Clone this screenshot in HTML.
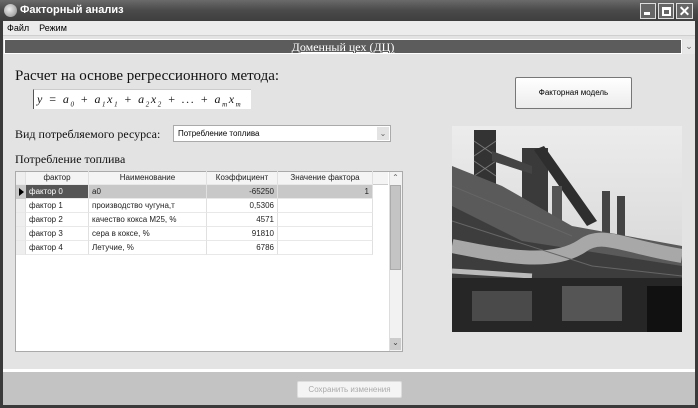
<!DOCTYPE html>
<html><head><meta charset="utf-8"><style>
*{margin:0;padding:0;box-sizing:border-box}
body{width:698px;height:408px;overflow:hidden;background:#3a3a3a;position:relative;font-family:"Liberation Sans",sans-serif}
.abs{position:absolute}
.title{left:0;top:0;width:698px;height:21px;background:linear-gradient(#6a6a6a,#4a4a4a 50%,#3e3e3e);color:#fff;font-weight:bold;font-size:11px;line-height:21px;padding-left:20px}
.client{left:3px;top:21px;width:692px;height:384px;background:#e3e3e3}
.menu{left:3px;top:21px;width:692px;height:15px;background:#ececec;font-size:9px;line-height:15px;padding-left:4px;border-bottom:1px solid #cfcfcf}
.banner{left:4px;top:39px;width:678px;height:15px;background:#5c5c5c;border:1px solid #fff;color:#fff;font-family:"Liberation Serif",serif;font-size:12px;line-height:15px;text-align:center;text-decoration:underline}
.ddbtn{left:683px;top:39px;width:12px;height:15px;background:#e8e8e8;font-size:9px;text-align:center;color:#666;line-height:14px}
.serif{font-family:"Liberation Serif",serif;color:#111}
.cell{position:absolute;font-size:8px;line-height:14px;height:14px;color:#222;border-right:1px solid #e0e0e0;border-bottom:1px solid #e8e8e8;padding:0 3px;white-space:nowrap}
.btn{border:1px solid #777;border-radius:2px;background:linear-gradient(#fff,#ececec);font-size:8px;text-align:center}
</style></head><body>
<div class="abs title">Факторный анализ</div>
<div class="abs" style="left:4px;top:4px;width:13px;height:13px;border-radius:50%;background:radial-gradient(circle at 40% 40%,#eee,#888)"></div>
<div class="abs" style="left:640px;top:3px;width:16px;height:16px;border:1px solid #ddd;background:#666"><div style="position:absolute;left:3px;bottom:3px;width:6px;height:3px;background:#fff"></div></div>
<div class="abs" style="left:658px;top:3px;width:16px;height:16px;border:1px solid #ddd;background:#666"><div style="position:absolute;left:3px;top:3px;width:9px;height:9px;border:2px solid #fff;border-top-width:3px"></div></div>
<div class="abs" style="left:676px;top:3px;width:17px;height:16px;border:1px solid #ddd;background:#666;color:#fff;font-size:14px;line-height:14px;text-align:center;font-weight:bold">✕</div>
<div class="abs client"></div>
<div class="abs menu">Файл &nbsp; &nbsp;Режим</div>
<div class="abs banner">Доменный цех (ДЦ)</div>
<div class="abs ddbtn">⌄</div>

<div class="abs serif" style="left:15px;top:68px;font-size:15px">Расчет на основе регрессионного метода:</div>
<div class="abs serif" style="left:33px;top:89px;width:218px;height:20px;background:#fff;border-left:1px solid #555;border-top:1px solid #ccc;font-style:italic;font-size:12px;line-height:19px;padding-left:3px;white-space:nowrap;letter-spacing:1.6px">y = a<sub style="font-size:7px">0</sub> + a<sub style="font-size:7px">1</sub>x<sub style="font-size:7px">1</sub> + a<sub style="font-size:7px">2</sub>x<sub style="font-size:7px">2</sub> + ... + a<sub style="font-size:7px">m</sub>x<sub style="font-size:7px">m</sub></div>

<div class="abs btn" style="left:515px;top:77px;width:117px;height:32px;line-height:30px">Факторная модель</div>

<div class="abs serif" style="left:15px;top:127px;font-size:12px">Вид потребляемого ресурса:</div>
<div class="abs" style="left:173px;top:125px;width:218px;height:17px;background:#fff;border:1px solid #aaa;font-size:8px;line-height:15px;padding-left:4px">Потребление топлива</div>
<div class="abs" style="left:377px;top:127px;width:12px;height:13px;background:#e3e3e3;font-size:8px;color:#666;text-align:center;line-height:13px">⌄</div>
<div class="abs serif" style="left:15px;top:152px;font-size:12px">Потребление топлива</div>

<div class="abs" style="left:15px;top:171px;width:388px;height:181px;background:#fff;border:1px solid #aaa"></div>
<div class="abs" style="left:16px;top:172px;width:372px;height:13px;background:#f4f4f4;border-bottom:1px solid #ccc"></div>
<div class="cell" style="left:16px;top:172px;width:10px;height:13px;background:#eee"></div>
<div class="cell" style="left:26px;top:171px;width:63px;text-align:center">фактор</div>
<div class="cell" style="left:89px;top:171px;width:118px;text-align:center">Наименование</div>
<div class="cell" style="left:207px;top:171px;width:71px;text-align:center">Коэффициент</div>
<div class="cell" style="left:278px;top:171px;width:95px;text-align:center">Значение фактора</div>
<div class="abs" style="left:16px;top:185px;width:357px;height:14px;background:#c8c8c8"></div>
<div class="abs" style="left:26px;top:185px;width:63px;height:14px;background:#555"></div>
<div class="abs" style="left:19px;top:188px;width:0;height:0;border-left:5px solid #000;border-top:4px solid transparent;border-bottom:4px solid transparent"></div>

<div class="cell" style="left:26px;top:185px;width:63px;color:#fff">фактор 0</div>
<div class="cell" style="left:89px;top:185px;width:118px">a0</div>
<div class="cell" style="left:207px;top:185px;width:71px;text-align:right">-65250</div>
<div class="cell" style="left:278px;top:185px;width:95px;text-align:right">1</div>

<div class="cell" style="left:16px;top:199px;width:10px;background:#eee"></div>
<div class="cell" style="left:26px;top:199px;width:63px">фактор 1</div>
<div class="cell" style="left:89px;top:199px;width:118px">производство чугуна,т</div>
<div class="cell" style="left:207px;top:199px;width:71px;text-align:right">0,5306</div>
<div class="cell" style="left:278px;top:199px;width:95px"></div>

<div class="cell" style="left:16px;top:213px;width:10px;background:#eee"></div>
<div class="cell" style="left:26px;top:213px;width:63px">фактор 2</div>
<div class="cell" style="left:89px;top:213px;width:118px">качество кокса М25, %</div>
<div class="cell" style="left:207px;top:213px;width:71px;text-align:right">4571</div>
<div class="cell" style="left:278px;top:213px;width:95px"></div>

<div class="cell" style="left:16px;top:227px;width:10px;background:#eee"></div>
<div class="cell" style="left:26px;top:227px;width:63px">фактор 3</div>
<div class="cell" style="left:89px;top:227px;width:118px">сера в коксе, %</div>
<div class="cell" style="left:207px;top:227px;width:71px;text-align:right">91810</div>
<div class="cell" style="left:278px;top:227px;width:95px"></div>

<div class="cell" style="left:16px;top:241px;width:10px;background:#eee"></div>
<div class="cell" style="left:26px;top:241px;width:63px">фактор 4</div>
<div class="cell" style="left:89px;top:241px;width:118px">Летучие, %</div>
<div class="cell" style="left:207px;top:241px;width:71px;text-align:right">6786</div>
<div class="cell" style="left:278px;top:241px;width:95px"></div>

<div class="abs" style="left:389px;top:172px;width:13px;height:179px;background:#f2f2f2;border-left:1px solid #ddd"></div>
<div class="abs" style="left:390px;top:185px;width:11px;height:85px;background:#c4c4c4;border:1px solid #aaa"></div>
<div class="abs" style="left:390px;top:173px;width:11px;height:11px;font-size:8px;color:#666;text-align:center">⌃</div>
<div class="abs" style="left:390px;top:338px;width:11px;height:12px;background:#ccc;font-size:8px;color:#444;text-align:center">⌄</div>

<svg class="abs" style="left:452px;top:126px" width="230" height="206" viewBox="0 0 230 206">
<defs><linearGradient id="sky" x1="0" y1="0" x2="0" y2="1"><stop offset="0" stop-color="#ececec"/><stop offset="1" stop-color="#cfcfcf"/></linearGradient></defs>
<rect width="230" height="206" fill="url(#sky)"/>
<rect x="22" y="4" width="22" height="60" fill="#333"/>
<g stroke="#777" stroke-width="1"><line x1="22" y1="15" x2="44" y2="30"/><line x1="44" y1="15" x2="22" y2="30"/><line x1="22" y1="35" x2="44" y2="50"/><line x1="44" y1="35" x2="22" y2="50"/></g>
<rect x="70" y="22" width="26" height="70" fill="#3a3a3a"/>
<polygon points="82,24 92,20 145,95 135,100" fill="#2e2e2e"/>
<polygon points="40,25 80,40 80,48 40,35" fill="#444"/>
<rect x="100" y="60" width="10" height="40" fill="#555"/>
<rect x="150" y="65" width="8" height="50" fill="#444"/>
<rect x="165" y="70" width="8" height="45" fill="#444"/>
<rect x="122" y="170" width="6" height="36" fill="#222"/>
<rect x="195" y="170" width="6" height="36" fill="#222"/>
<rect x="180" y="210" width="8" height="40" fill="#444"/>
<polygon points="0,40 50,60 120,100 230,120 230,206 0,206" fill="#5a5a5a"/>
<polygon points="0,80 70,115 230,140 230,206 0,206" fill="#3d3d3d"/>
<path d="M0,120 C50,130 100,140 130,120 C150,105 170,120 230,130" stroke="#a8a8a8" stroke-width="14" fill="none"/>
<path d="M0,145 L80,150" stroke="#bbb" stroke-width="5" fill="none"/>
<rect x="0" y="152" width="230" height="54" fill="#262626"/>
<rect x="20" y="165" width="60" height="30" fill="#4a4a4a"/>
<rect x="110" y="160" width="60" height="35" fill="#555"/>
<rect x="195" y="160" width="35" height="46" fill="#111"/>
<g stroke="#666" stroke-width="1"><line x1="0" y1="60" x2="120" y2="110"/><line x1="0" y1="95" x2="140" y2="140"/><line x1="140" y1="140" x2="230" y2="150"/></g>
</svg>

<div class="abs" style="left:3px;top:369px;width:692px;height:3px;background:#fff"></div>
<div class="abs" style="left:3px;top:372px;width:692px;height:33px;background:#c3c3c3"></div>
<div class="abs btn" style="left:297px;top:381px;width:105px;height:17px;line-height:15px;color:#aaa;border-color:#ddd;background:#f4f4f4">Сохранить изменения</div>
</body></html>
